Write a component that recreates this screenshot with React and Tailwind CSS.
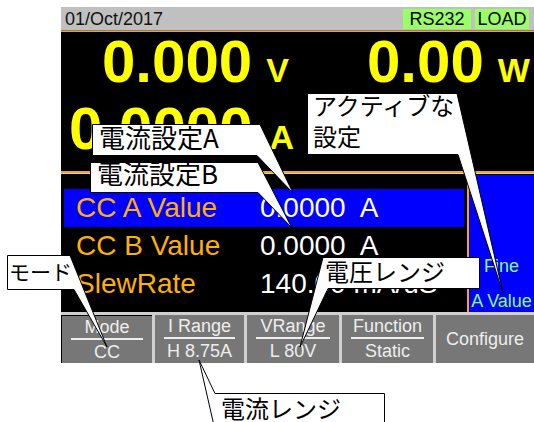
import React from "react";

const rows = [
  { label: "CC A Value", value: "0.0000  A", active: true },
  { label: "CC B Value", value: "0.0000  A" },
  { label: "SlewRate", value: "140.00 mA/uS" },
];

const keys = [
  { top: "Mode", bottom: "CC", width: "w-[91px]", pressed: true },
  { top: "I Range", bottom: "H 8.75A", width: "w-[89px]" },
  { top: "VRange", bottom: "L 80V", width: "w-[92px]" },
  { top: "Function", bottom: "Static", width: "w-[91px]" },
];

// callout balloons: outline + text
const callouts = [
  {
    points: "307.5,93.5 457,93.5 503,293 458,154.5 307.5,154.5",
    text: "アクティブな\n設定",
    className: "left-[313px] top-[89px] text-[24px] leading-[31px]",
  },
  {
    points: "92.5,124.5 260,124.5 293,193 257,155.5 92.5,155.5",
    text: "電流設定A",
    className: "left-[99px] top-[121px] text-[26px] leading-[31px]",
  },
  {
    points: "90.5,162.5 258,162.5 292,228 258,192.5 90.5,192.5",
    text: "電流設定B",
    className: "left-[97px] top-[157px] text-[26px] leading-[31px]",
  },
  {
    points: "7.5,255.5 70,255.5 107,347 74,289.5 7.5,289.5",
    text: "モード",
    className: "left-[9px] top-[258px] text-[21px] leading-[27px]",
  },
  {
    points: "323,257.5 479.5,257.5 479.5,288.5 328,288.5 300,347",
    text: "電圧レンジ",
    className: "left-[325px] top-[255px] text-[24px] leading-[31px]",
  },
  {
    points: "199,360 215,393.5 384.5,393.5 384.5,430 215,430",
    text: "電流レンジ",
    className: "left-[221px] top-[394px] text-[24px] leading-[27px]",
  },
];

const App = () => {
  return (
    <div className="relative w-[534px] h-[422px] overflow-hidden bg-white font-['Liberation_Sans',Arial,sans-serif]">
      <div className="ml-[61px] pt-[7px] w-[473px]">
        {/* status bar */}
        <div className="h-[23px] bg-[#c0c0c0] flex items-center justify-between">
          <span className="pl-[4px] text-[18px] leading-none text-[#111]">01/Oct/2017</span>
          <div className="flex gap-[4px] pr-[5px]">
            <span className="w-[68px] h-[20px] bg-[#99ff66] text-[18px] leading-[20px] text-center text-black">RS232</span>
            <span className="w-[54px] h-[20px] bg-[#99ff66] text-[18px] leading-[20px] text-center text-black">LOAD</span>
          </div>
        </div>
        <div className="h-[1px] bg-[#808080]"></div>
        <div className="h-[1px] bg-[#ffa500]"></div>

        {/* readouts */}
        <div className="bg-black h-[139px] text-[#ffff00] font-bold">
          <div className="flex items-baseline h-[60px]">
            <div className="w-[265px] pl-[41px] flex items-baseline">
              <span className="text-[60px] leading-[60px]">0.000</span>
              <span className="ml-[14px] text-[34px] leading-none">V</span>
            </div>
            <div className="flex items-baseline pl-[41px]">
              <span className="text-[60px] leading-[60px]">0.00</span>
              <span className="ml-[14px] text-[34px] leading-none">W</span>
            </div>
          </div>
          <div className="mt-[7px] pl-[8px] flex items-baseline h-[60px]">
            <span className="text-[60px] leading-[60px]">0.0000</span>
            <span className="ml-[17px] text-[34px] leading-none">A</span>
          </div>
        </div>
        <div className="h-[2px] bg-[#ffa500]"></div>
        <div className="h-[1px] bg-[#d0d0d0]"></div>

        {/* settings */}
        <div className="flex bg-black h-[138px]">
          <div className="w-[406px] pt-[15px] px-[3px]">
            {rows.map((r) => (
              <div
                key={r.label}
                className={`flex items-center h-[38px] pl-[12px] text-[28px] whitespace-pre ${
                  r.active ? "bg-[#0000ff]" : ""
                }`}
              >
                <span className="w-[184px] text-[#ffb000]">{r.label}</span>
                <span className="text-white">{r.value}</span>
              </div>
            ))}
          </div>
          <div className="flex-1 mt-[1px] border-l-2 border-[#ffa500] bg-[#0000ff] flex flex-col justify-end items-center text-[18px] leading-[21px] text-[#80ff80] whitespace-nowrap">
            <span>Fine</span>
            <span className="mt-[14px]">A Value</span>
          </div>
        </div>

        {/* soft keys */}
        <div className="flex gap-[3px] pt-[3px] bg-[#d0d0d0]">
          {keys.map((k) => (
            <div
              key={k.top}
              className={`${k.width} h-[48px] bg-[#777777] flex flex-col items-center text-[18px] leading-[20px] text-[#eeeeee] ${
                k.pressed ? "border-l border-t border-black" : ""
              }`}
            >
              <span className="pt-[1px]">{k.top}</span>
              <div className="self-stretch mx-[9px] h-[2px] bg-[#eeeeee] mt-[1px]"></div>
              <span className="mt-[2px]">{k.bottom}</span>
            </div>
          ))}
          <div className="flex-1 h-[48px] bg-[#777777] flex items-center justify-center text-[18px] text-[#eeeeee]">
            Configure
          </div>
        </div>
      </div>

      {/* callouts */}
      <svg className="absolute left-0 top-0" width="534" height="422" viewBox="0 0 534 422">
        {callouts.map((c) => (
          <polygon key={c.text} points={c.points} fill="#ffffff" stroke="#000000" strokeWidth="1" />
        ))}
      </svg>
      {callouts.map((c) => (
        <div
          key={c.text}
          className={`absolute whitespace-pre text-black font-['Noto_Sans_CJK_JP',sans-serif] ${c.className}`}
        >
          {c.text}
        </div>
      ))}
    </div>
  );
};

export default App;
